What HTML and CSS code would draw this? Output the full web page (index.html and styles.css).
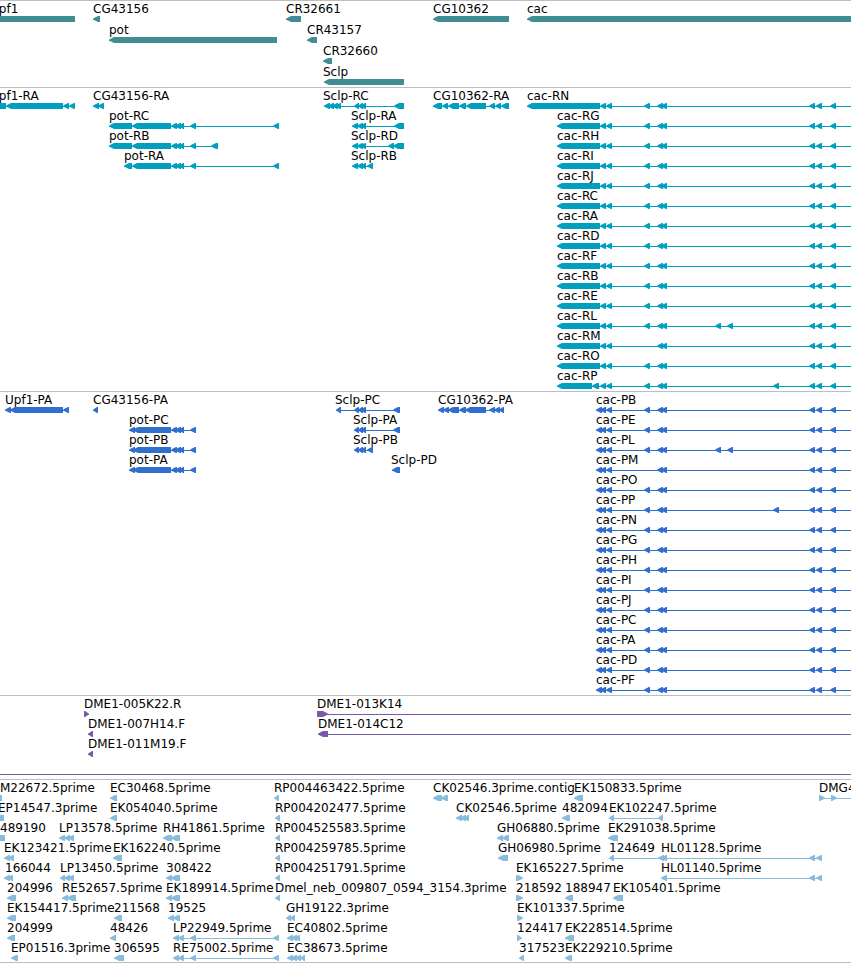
FILE: index.html
```
<!DOCTYPE html>
<html lang="en">
<head>
    <meta charset="UTF-8">
    <meta name="viewport" content="width=device-width, initial-scale=1.0">
    <title>Genome Browser</title>
    <link rel="stylesheet" href="styles.css">
</head>
<body>
    <main class="browser">
        <section class="track genes" id="genes" aria-label="Genes"></section>
        <section class="track transcripts" id="transcripts" aria-label="Transcripts"></section>
        <section class="track proteins" id="proteins" aria-label="Proteins"></section>
        <section class="track clones" id="clones" aria-label="Clones"></section>
        <section class="track ests" id="ests" aria-label="ESTs"></section>
    </main>
    <script src="tracks.js"></script>
</body>
</html>
```

FILE: styles.css
```
body {
    margin: 0;
    background: #fff;
    overflow-x: hidden;
}
.track {
    border-top: 1px solid #bebebe;
    padding: 2px 0 1px;
}
.row {
    display: block;
    width: 100%;
    height: 20px;
    overflow: visible;
}
.row text {
    font-family: "DejaVu Sans", Verdana, sans-serif;
    font-size: 12px;
    fill: #000;
}
.genes {
    color: #408e94;
    padding-bottom: 0;
}
.genes .row {
    height: 21px;
}
.transcripts {
    color: #009fbf;
}
.proteins {
    color: #306fcd;
}
.clones {
    color: #785aa8;
}
.ests {
    color: #88bcdd;
    padding-bottom: 0;
    border-bottom: 1px solid #bebebe;
}
.span {
    fill: currentColor;
    shape-rendering: crispEdges;
}
.exon {
    fill: currentColor;
}
```

FILE: tracks.js
```
const SVG = 'http://www.w3.org/2000/svg';

// exons shared by the cac isoforms
const cacLeft = '600-606 606-612 ';
const cacMid = '644-650 ';
const cacPair = '657-663 661-667 ';
const cacRight = '809-815 816-822 830-836 870-880';
const cac = cacLeft + cacMid + cacPair + cacRight;
const cacL = cacLeft + cacMid + cacPair + '715-721 727-733 ' + cacRight;
const cacM = cacLeft + cacPair + cacRight;
const cacP = cacLeft + cacMid + cacPair + '773-779 ' + cacRight;
const potMid = '171-177 175-181 179-184 190-196';

// feature: [label, label x, exons, strand]
const tracks = {
    genes: [
        [['Upf1', -10, '-20-75'], ['CG43156', 93, '93-100'], ['CR32661', 286, '286-301'], ['CG10362', 433, '433-509'], ['cac', 527, '527-880']],
        [['pot', 109, '109-277'], ['CR43157', 307, '307-317']],
        [['CR32660', 323, '323-332']],
        [['Sclp', 323, '324-404']]
    ],
    transcripts: [
        [['Upf1-RA', -10, '-20-6 6-63 63-69 69-75'], ['CG43156-RA', 93, '93-99 98-104'],
            ['Sclp-RC', 323, '324-330 328-334 332-338 336-341 354-359 358-363 361-366 394-404'],
            ['CG10362-RA', 433, '433-442 442-448 448-459 459-466 466-486 489-495 495-501 501-509'],
            ['cac-RN', 527, '527-600 ' + cac]],
        [['pot-RC', 109, '109-132 132-171 ' + potMid + ' 273-279'], ['Sclp-RA', 351, '352-358 357-363 361-366 394-404'], ['cac-RG', 557, '557-600 ' + cac]],
        [['pot-RB', 109, '109-132 132-171 ' + potMid + ' 211-218'], ['Sclp-RD', 351, '352-358 357-363 361-366 388-394 393-404'], ['cac-RH', 557, '557-600 ' + cac]],
        [['pot-RA', 124, '124-132 132-171 ' + potMid + ' 273-279'], ['Sclp-RB', 351, '352-358 357-363 361-366 367-373'], ['cac-RI', 557, '557-600 ' + cac]],
        [['cac-RJ', 557, '557-600 ' + cac]],
        [['cac-RC', 557, '557-600 ' + cac]],
        [['cac-RA', 557, '557-600 ' + cac]],
        [['cac-RD', 557, '557-600 ' + cac]],
        [['cac-RF', 557, '557-600 ' + cac]],
        [['cac-RB', 557, '557-600 ' + cac]],
        [['cac-RE', 557, '557-600 ' + cac]],
        [['cac-RL', 557, '557-600 ' + cacL]],
        [['cac-RM', 557, '557-600 ' + cacM]],
        [['cac-RO', 557, '557-600 ' + cac]],
        [['cac-RP', 557, '557-592 592-599 ' + cacP]]
    ],
    proteins: [
        [['Upf1-PA', 5, '5-11 10-63 63-69'], ['CG43156-PA', 93, '93-98'],
            ['Sclp-PC', 335, '336-341 354-359 358-363 361-366 393-400'],
            ['CG10362-PA', 438, '438-444 443-449 448-459 459-466 465-486 489-495 494-500 499-504'],
            ['cac-PB', 596, '596-602 ' + cac]],
        [['pot-PC', 129, '129-135 133-171 ' + potMid], ['Sclp-PA', 353, '354-359 358-363 361-366 393-400'], ['cac-PE', 596, '596-602 ' + cac]],
        [['pot-PB', 129, '129-135 133-171 ' + potMid], ['Sclp-PB', 353, '354-359 358-363 361-366 367-373'], ['cac-PL', 596, '596-602 ' + cacL]],
        [['pot-PA', 129, '129-135 133-171 ' + potMid], ['Sclp-PD', 391, '392-400'], ['cac-PM', 596, '596-602 ' + cacM]],
        [['cac-PO', 596, '596-602 ' + cac]],
        [['cac-PP', 596, '596-602 ' + cacP]],
        [['cac-PN', 596, '596-602 ' + cac]],
        [['cac-PG', 596, '596-602 ' + cac]],
        [['cac-PH', 596, '596-602 ' + cac]],
        [['cac-PI', 596, '596-602 ' + cac]],
        [['cac-PJ', 596, '596-602 ' + cac]],
        [['cac-PC', 596, '596-602 ' + cac]],
        [['cac-PA', 596, '596-602 ' + cac]],
        [['cac-PD', 596, '596-602 ' + cac]],
        [['cac-PF', 596, '596-602 ' + cac]]
    ],
    clones: [
        [['DME1-005K22.R', 84, '84-89', '+'], ['DME1-013K14', 317, '317-328 870-880', '+']],
        [['DME1-007H14.F', 88, '88-93'], ['DME1-014C12', 318, '318-328 870-880']],
        [['DME1-011M19.F', 88, '88-93']],
        [['', 0, '-20--10 870-880']]
    ],
    ests: [
        [['M22672.5prime', 0, '-10-2'], ['EC30468.5prime', 110, '110-117'], ['RP004463422.5prime', 274, '274-279'],
            ['CK02546.3prime.contig', 433, '433-442 441-448'], ['EK150833.5prime', 574, '574-583'], ['DMG4', 819, '819-825 831-837 870-880', '+']],
        [['EP14547.3prime', -2, '-5-4'], ['EK054040.5prime', 110, '110-117'], ['RP004202477.5prime', 275, '275-280'],
            ['CK02546.5prime', 456, '456-462 460-466 464-469'], ['482094', 562, '562-570'], ['EK102247.5prime', 609, '609-614 658-663']],
        [['489190', 0, '-5-5'], ['LP13578.5prime', 59, '59-65 64-70 68-74'], ['RH41861.5prime', 163, '163-172 171-180'],
            ['RP004525583.5prime', 275, '275-280'], ['GH06880.5prime', 497, '497-503 502-509'], ['EK291038.5prime', 608, '608-618']],
        [['EK123421.5prime', 4, '4-10 8-14'], ['EK162240.5prime', 113, '113-122'], ['RP004259785.5prime', 275, '275-280'],
            ['GH06980.5prime', 498, '498-508'], ['124649', 609, '609-614 658-664'], ['HL01128.5prime', 661, '661-667 809-815 816-822']],
        [['166044', 5, '4-10 8-13'], ['LP13450.5prime', 60, '60-65 64-70 68-74'], ['308422', 166, '166-172 171-180'],
            ['RP004251791.5prime', 275, '275-280'], ['EK165227.5prime', 516, '516-523', '+'], ['HL01140.5prime', 661, '661-667 809-815 816-822']],
        [['204996', 7, '7-16'], ['RE52657.5prime', 62, '62-68 67-76'], ['EK189914.5prime', 166, '166-172 171-180'],
            ['Dmel_neb_009807_0594_3154.3prime', 275, '275-280'], ['218592', 516, '516-523', '+'], ['188947', 565, '565-573'], ['EK105401.5prime', 613, '613-623']],
        [['EK154417.5prime', 7, '7-16'], ['211568', 114, '114-122'], ['19525', 168, '168-174 173-180'],
            ['GH19122.3prime', 286, '286-291 290-295'], ['EK101337.5prime', 517, '517-523', '+']],
        [['204999', 7, '7-15'], ['48426', 110, '110-116'], ['LP22949.5prime', 173, '173-179 178-184 190-196 273-279'],
            ['EC40802.5prime', 287, '287-293 291-297 295-300'], ['124417', 517, '517-522', '+'], ['EK228514.5prime', 565, '565-574']],
        [['EP01516.3prime', 11, '11-18'], ['306595', 114, '114-124'], ['RE75002.5prime', 173, '173-179 178-184 190-196 273-279'],
            ['EC38673.5prime', 287, '287-293 291-297 295-301 300-305'], ['317523', 519, '519-524'], ['EK229210.5prime', 565, '565-572']]
    ]
};

function add(parent, name, attrs) {
    const el = document.createElementNS(SVG, name);
    for (const key in attrs) {
        el.setAttribute(key, attrs[key]);
    }
    parent.appendChild(el);
    return el;
}

// bar with a pointed end on the side the strand runs to
function exonPath(start, end, strand) {
    const head = Math.min(5, end - start - 1);
    if (strand === '+') {
        return `M${start} 13H${end - head}L${end - 1} 15L${end} 16L${end - 1} 17L${end - head} 19H${start}Z`;
    }
    return `M${end} 13H${start + head}L${start + 1} 15L${start} 16L${start + 1} 17L${start + head} 19H${end}Z`;
}

function drawFeature(svg, [label, x, exons, strand]) {
    const parts = exons.split(' ').map(e => e.match(/^(-?\d+)-(-?\d+)$/).slice(1).map(Number));
    const start = parts[0][0];
    const end = parts[parts.length - 1][1];
    add(svg, 'rect', { class: 'span', x: start, y: 16, width: end - start, height: 1 });
    parts.forEach(([a, b]) => {
        add(svg, 'path', { class: 'exon', d: exonPath(a, b, strand) });
    });
    if (label) {
        add(svg, 'text', { x: x, y: 10 }).textContent = label;
    }
}

for (const id in tracks) {
    tracks[id].forEach(features => {
        const svg = add(document.getElementById(id), 'svg', { class: 'row' });
        features.forEach(f => drawFeature(svg, f));
    });
}
```
